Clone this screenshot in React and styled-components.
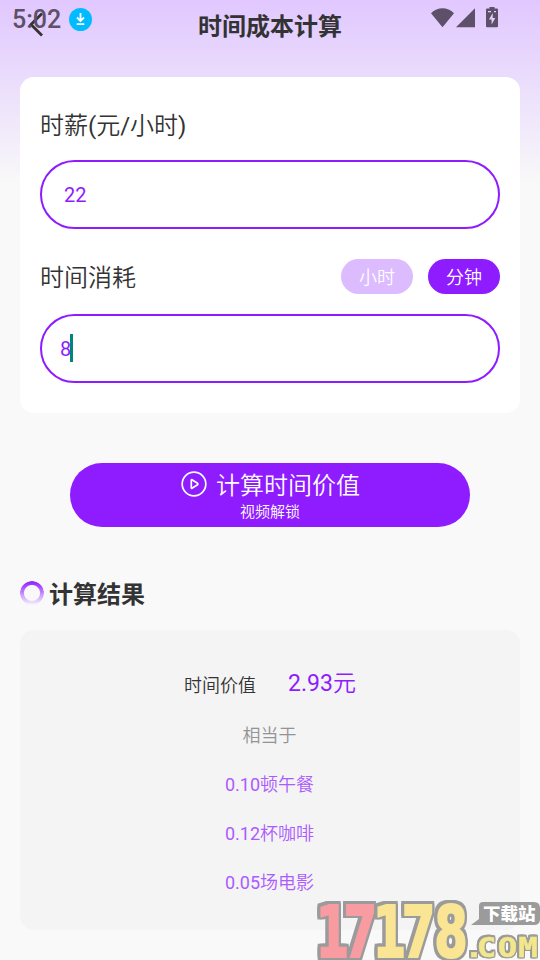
import React, { useState } from "react";
import styled, { createGlobalStyle } from "styled-components";

const equivalents = ["0.10顿午餐", "0.12杯咖啡", "0.05场电影"];

const App = () => {
  const [unit, setUnit] = useState("minute");

  return (
    <Page>
      <GlobalStyle />
      <Header>
        <BackIcon viewBox="0 0 20 26">
          <path d="M15 1.5 L4 12.500 L15 23.500" />
        </BackIcon>
        <Title>时间成本计算</Title>
      </Header>
      <StatusBar>
        <Clock>5:02</Clock>
        <DownloadBadge viewBox="0 0 23 23">
          <circle cx="11.5" cy="11.5" r="11.5" fill="#00bcff" />
          <path d="M11.5 5v8M8 9.500l3.5 3.5L15 9.500M7.700 16.200h7.600" />
        </DownloadBadge>
        <StatusIcons viewBox="0 0 70 22">
          <path d="M1 5.2C7.5-1.4 17.500-1.400 24 5.200L12.500 19.200Z" />
          <path d="M26 19.200L45 0.200V19.200Z" />
          <path d="M59.500 -1h5v1.500h2.500q1 0 1 1V18.200q0 1-1 1H57q-1 0-1-1V1.500q0-1 1-1h2.500Z" />
          <path
            d="M62.700 5L59 11.500h2.600V16.500L65.300 10h-2.600ZM58 3h3v1.200h-3ZM64 3h2v1.200h-2Z"
            fill="#e5d0fd"
          />
        </StatusIcons>
      </StatusBar>

      <FormCard>
        <FieldRow>
          <Label>时薪(元/小时)</Label>
        </FieldRow>
        <Field $gap={18} $indent={22}>
          22
        </Field>
        <FieldRow $top={30}>
          <Label>时间消耗</Label>
          <Units>
            <UnitButton $active={unit === "hour"} onClick={() => setUnit("hour")}>
              小时
            </UnitButton>
            <UnitButton
              $active={unit === "minute"}
              onClick={() => setUnit("minute")}
            >
              分钟
            </UnitButton>
          </Units>
        </FieldRow>
        <Field $gap={20} $indent={18}>
          8<Caret />
        </Field>
      </FormCard>

      <Submit>
        <SubmitMain>
          <PlayIcon viewBox="0 0 26 26">
            <circle cx="13" cy="13" r="11.800" />
            <path d="M10.300 9.200V16.800Q10.300 17.600 11 17.200L16.500 13.800Q17.300 13 16.500 12.300L11 8.800Q10.300 8.400 10.300 9.200Z" />
          </PlayIcon>
          计算时间价值
        </SubmitMain>
        <SubmitNote>视频解锁</SubmitNote>
      </Submit>

      <SectionHeading>
        <Ring />
        计算结果
      </SectionHeading>

      <ResultCard>
        <ResultTop>
          <ResultLabel>时间价值</ResultLabel>
          <ResultValue>2.93元</ResultValue>
        </ResultTop>
        <ResultRow $color="#939393">相当于</ResultRow>
        {equivalents.map((item) => (
          <ResultRow key={item} $color="#ac5bff">
            {item}
          </ResultRow>
        ))}
      </ResultCard>

      <Watermark viewBox="0 0 224 62">
        <Outlined $width={2.5}>
          <Digits
            $color="#f99ca2"
            transform="scale(0.68 1)"
            x="-0.5 40.5"
            y="58.5"
          >
            17
          </Digits>
          <Digits
            $color="#fae594"
            transform="scale(0.68 1)"
            x="83.5 126 174"
            y="58.5"
          >
            178
          </Digits>
        </Outlined>
        <path
          d="M167 4h51q6 0 6 6v11q0 6-6 6h-63l8-6V8q0-4 4-4Z"
          fill="#9b9b9b"
        />
        <Tag x="167" y="22">
          下载站
        </Tag>
        <Outlined $width={1.5}>
          <Domain
            transform="scale(1.2 1)"
            x="123.5 134 151.500 168.500"
            y="59"
          >
            .COM
          </Domain>
        </Outlined>
      </Watermark>
    </Page>
  );
};

const GlobalStyle = createGlobalStyle`
  * {
    box-sizing: border-box;
  }
  body {
    margin: 0;
    background: #f9f9f9;
  }
`;

const Page = styled.div`
  position: relative;
  width: 540px;
  height: 960px;
  overflow: hidden;
  background: linear-gradient(#e1c7ff 0, #eadcfc 77px, #f9f9f9 185px);
  font-family: Roboto, "Noto Sans CJK SC DemiLight", "Noto Sans CJK SC",
    sans-serif;
  color: #333;
`;

const Header = styled.header`
  display: flex;
  align-items: center;
  height: 50px;
  padding-left: 27px;
`;

const BackIcon = styled.svg`
  width: 20px;
  height: 26px;
  fill: none;
  stroke: #333;
  stroke-width: 2.8;
`;

const Title = styled.h1`
  flex: 1;
  margin: 3px 47px 0 0;
  text-align: center;
  font-family: Roboto, "Noto Sans CJK SC", sans-serif;
  font-size: 24px;
  font-weight: 700;
  line-height: 36px;
`;

/* system bar drawn over the page header */
const StatusBar = styled.div`
  position: absolute;
  top: 0;
  left: 0;
  display: flex;
  align-items: center;
  width: 100%;
  height: 38px;
  padding: 0 40px 0 12px;
`;

const Clock = styled.span`
  width: 57px;
  padding-top: 2px;
  font-size: 25px;
  font-weight: 500;
  line-height: 38px;
  color: #5e5069;
`;

const DownloadBadge = styled.svg`
  width: 23px;
  height: 23px;
  fill: none;
  stroke: #fff;
  stroke-width: 1.8;

  circle {
    stroke: none;
  }
`;

const StatusIcons = styled.svg`
  width: 70px;
  height: 22px;
  margin: 0 0 0 auto;
  overflow: visible;
  fill: #5e5069;
`;

const FormCard = styled.section`
  margin: 27px 20px 0;
  padding: 30px 20px;
  border-radius: 14px;
  background: #fff;
`;

const FieldRow = styled.div`
  display: flex;
  align-items: center;
  justify-content: space-between;
  height: 35px;
  margin-top: ${(props) => props.$top || 0}px;
`;

const Label = styled.label`
  padding-top: 3px;
  font-size: 24px;
  line-height: 35px;
`;

const Units = styled.div`
  display: flex;
  gap: 15px;
`;

const UnitButton = styled.button`
  width: 72px;
  height: 35px;
  padding: 2px 0 0;
  border: 0;
  border-radius: 18px;
  background: ${(props) => (props.$active ? "#8f1bff" : "#dcbbff")};
  color: #fff;
  font-family: inherit;
  font-size: 18px;
  line-height: 33px;
`;

const Field = styled.div`
  display: flex;
  align-items: center;
  height: 69px;
  margin-top: ${(props) => props.$gap}px;
  padding-left: ${(props) => props.$indent}px;
  border: 2px solid #8f1bff;
  border-radius: 35px;
  color: #8f1bff;
  font-size: 20px;
`;

const Caret = styled.span`
  width: 3px;
  height: 28px;
  margin: -1px 0 0 -1px;
  background: #00857a;
`;

const Submit = styled.button`
  display: flex;
  flex-direction: column;
  align-items: center;
  width: 400px;
  height: 64px;
  margin: 50px auto 0;
  padding: 5px 0 0;
  border: 0;
  border-radius: 32px;
  background: #8f1bff;
  color: #fff;
  font-family: inherit;
`;

const SubmitMain = styled.span`
  display: flex;
  align-items: center;
  gap: 9px;
  padding-left: 1px;
  font-size: 24px;
  line-height: 36px;
`;

const PlayIcon = styled.svg`
  width: 26px;
  height: 26px;
  margin-top: -4px;
  fill: none;
  stroke: #fff;
  stroke-width: 1.7;
`;

const SubmitNote = styled.span`
  font-size: 15px;
  line-height: 16px;
`;

const SectionHeading = styled.h2`
  display: flex;
  align-items: center;
  gap: 5px;
  height: 36px;
  margin: 50px 20px 0;
  font-family: Roboto, "Noto Sans CJK SC", sans-serif;
  font-size: 24px;
  font-weight: 700;
  line-height: 36px;
`;

const Ring = styled.span`
  width: 24px;
  height: 24px;
  margin-top: -4px;
  border-radius: 50%;
  background: linear-gradient(#8f1bff, #f9f4ff);
  mask: radial-gradient(circle, transparent 7.500px, #000 8.500px);
`;

const ResultCard = styled.section`
  height: 300px;
  margin: 17px 20px 0;
  padding-top: 36px;
  border-radius: 14px;
  background: #f4f4f4;
`;

const ResultTop = styled.div`
  display: flex;
  align-items: center;
  justify-content: center;
  gap: 32px;
  height: 36px;
  margin-bottom: 9px;
`;

const ResultLabel = styled.span`
  margin-top: -1px;
  font-size: 18px;
`;

const ResultValue = styled.span`
  margin-top: -6px;
  font-size: 23px;
  color: #8f1bff;
`;

const ResultRow = styled.p`
  margin: 0;
  padding-right: 1px;
  text-align: center;
  font-size: 18px;
  line-height: 49px;
  color: ${(props) => props.$color};
`;

const Watermark = styled.svg`
  position: absolute;
  right: 0;
  bottom: 0;
  width: 224px;
  height: 62px;
`;

/* square-cornered outline, built from one hard shadow per side */
const Outlined = styled.g`
  filter: drop-shadow(${(props) => props.$width}px 0 0 #9b9b9b)
    drop-shadow(-${(props) => props.$width}px 0 0 #9b9b9b)
    drop-shadow(0 ${(props) => props.$width}px 0 #9b9b9b)
    drop-shadow(0 -${(props) => props.$width}px 0 #9b9b9b);
`;

const Digits = styled.text`
  font-family: "DejaVu Sans", sans-serif;
  font-size: 71px;
  font-weight: 700;
  fill: ${(props) => props.$color};
  stroke: ${(props) => props.$color};
  stroke-width: 2px;
`;

const Tag = styled.text`
  font-family: "Noto Sans CJK SC", sans-serif;
  font-size: 17.5px;
  font-weight: 900;
  fill: #fff;
`;

const Domain = styled.text`
  font-family: "DejaVu Sans Mono", monospace;
  font-size: 27px;
  font-weight: 700;
  fill: #f3e78c;
  stroke: #f3e78c;
  stroke-width: 0.5px;
`;

export default App;
